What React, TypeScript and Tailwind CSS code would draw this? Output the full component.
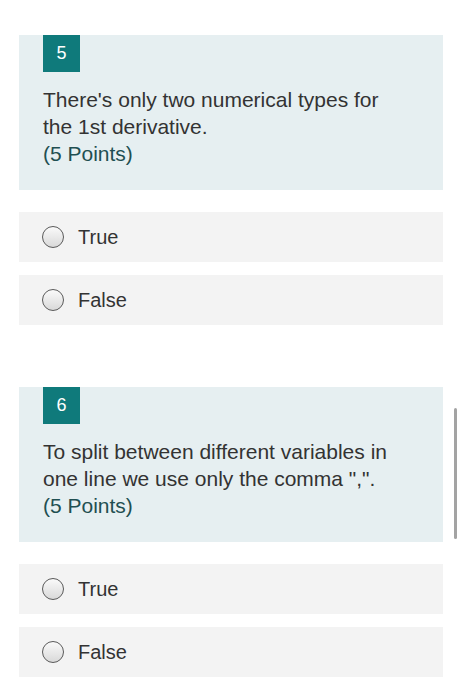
import React from "react";

const Radio = () => (
  <span className="inline-block w-[22px] h-[22px] rounded-full border-[1.5px] border-[#5a5a5a] bg-gradient-to-b from-[#fafafa] to-[#d9d9d9] shrink-0" />
);

const Option = ({ label }: { label: string }) => (
  <div className="h-[50px] bg-[#f3f3f3] flex items-center pl-[23px] gap-[14px]">
    <Radio />
    <span className="text-[20px] text-[#333333] leading-none">{label}</span>
  </div>
);

const Question = ({ n, text }: { n: number; text: string }) => (
  <div>
    <div className="bg-[#e6eff1] h-[155px] pl-[24px] pr-[24px]">
      <div className="w-[37px] h-[37px] bg-[#0f7a7b] text-white text-[18px] flex items-center justify-center">
        {n}
      </div>
      <div className="mt-[14px] text-[21px] leading-[27px] text-[#333333] max-w-[360px]">
        {text}
      </div>
      <div className="text-[21px] leading-[27px] text-[#1f4f52]">(5 Points)</div>
    </div>
    <div className="mt-[22px] flex flex-col gap-[13px]">
      <Option label="True" />
      <Option label="False" />
    </div>
  </div>
);

export default function App() {
  return (
    <div
      className="relative w-[462px] h-[700px] bg-white overflow-hidden"
      style={{ fontFamily: '"Liberation Sans", Arial, sans-serif' }}
    >
      <div className="pt-[35px] pl-[19px] w-[443px] flex flex-col gap-[62px]">
        <Question n={5} text="There's only two numerical types for the 1st derivative." />
        <Question n={6} text={'To split between different variables in one line we use only the comma ",".'} />
      </div>
      <div className="absolute left-[454px] top-[408px] w-[3px] h-[131px] rounded-full bg-[#a3a3a3]" />
    </div>
  );
}
